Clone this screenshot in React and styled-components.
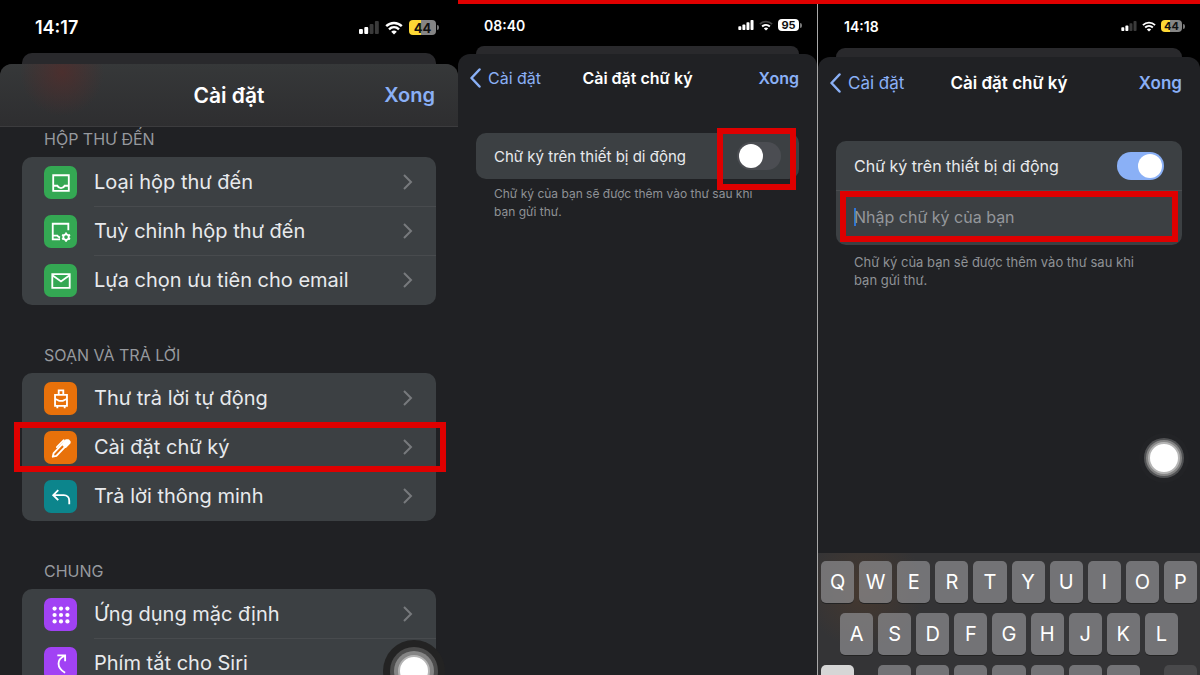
import { useState } from "react";
import styled, { createGlobalStyle, css } from "styled-components";

const GlobalStyle = createGlobalStyle`
  * {
    box-sizing: border-box;
  }

  body {
    margin: 0;
    background: #000;
    color: #e8eaed;
    font-family: Inter, "Noto Sans", sans-serif;
  }

  button, input {
    font-family: inherit;
    color: inherit;
    border: 0;
    padding: 0;
    margin: 0;
    background: none;
  }
`;

const RED = "#df0000";
const BLUE = "#8ab0f6";

const Page = styled.main`
  display: grid;
  grid-template-columns: 458fr 742fr;
  height: 100vh;
  overflow: hidden;
`;

const Pair = styled.div`
  display: grid;
  grid-template-columns: 359fr 1px 382fr;
  border-top: 4px solid ${RED};
  min-height: 0;
`;

const Divider = styled.div`
  background: #a8a8a8;
`;

const Screen = styled.section`
  position: relative;
  display: flex;
  flex-direction: column;
  min-width: 0;
  min-height: 0;
  overflow: hidden;
`;

const StatusBar = styled.div`
  display: flex;
  flex: none;
  align-items: center;
  justify-content: space-between;
  height: ${(p) => p.$height}px;
  padding: ${(p) => (p.$large ? "2px 19px 0 35px" : "0 15px 0 26px")};
`;

const Clock = styled.time`
  color: #fff;
  font-size: ${(p) => (p.$large ? 18 : 14)}px;
  font-weight: 600;
`;

const StatusIcons = styled.div`
  display: flex;
  align-items: center;
  gap: ${(p) => (p.$large ? 6 : 5)}px;
`;

const Battery = styled.span`
  display: flex;
  align-items: center;
  justify-content: center;
  width: ${(p) => (p.$large ? 27 : 21)}px;
  height: ${(p) => (p.$large ? 15 : 12)}px;
  border-radius: 4px;
  font-size: ${(p) => (p.$large ? 13 : 11)}px;
  font-weight: 700;
  color: #111;
  background: ${(p) =>
    p.$low ? "linear-gradient(90deg, #fdd835 44%, #858585 44%)" : "#fff"};
`;

const BatteryTip = styled.span`
  width: 2px;
  height: 5px;
  margin-left: ${(p) => (p.$large ? -5 : -4)}px;
  border-radius: 0 2px 2px 0;
  background: #777;
`;

const BackSheet = styled.div`
  flex: none;
  height: ${(p) => p.$height}px;
  margin: 0 ${(p) => (p.$large ? 22 : 18)}px;
  border-radius: 10px 10px 0 0;
  background: #29292c;
`;

const Sheet = styled.div`
  display: flex;
  flex: 1;
  flex-direction: column;
  min-height: 0;
  overflow: hidden;
  border-radius: 12px 12px 0 0;
  background: #202124;
`;

const NavBar = styled.header`
  display: grid;
  flex: none;
  grid-template-columns: 1fr auto 1fr;
  align-items: center;
  height: ${(p) => p.$height}px;
  padding: 0 ${(p) => (p.$large ? 23 : 18)}px;
  ${(p) =>
    p.$large &&
    css`
      border-bottom: 1px solid #3c3c3e;
      background: radial-gradient(
          ellipse 42px 44px at 62px 8px,
          rgba(90, 42, 40, 0.6),
          transparent
        ),
        linear-gradient(#363839, #2e2e30);
    `}
`;

const NavTitle = styled.h1`
  grid-column: 2;
  margin: 0;
  color: #fff;
  font-size: ${(p) => p.$size}px;
  font-weight: 600;
`;

const NavDone = styled.button`
  justify-self: end;
  color: ${BLUE};
  font-size: ${(p) => p.$size}px;
  font-weight: 600;
`;

const NavBack = styled.a`
  display: flex;
  align-items: center;
  gap: 7px;
  margin-left: -7px;
  color: ${BLUE};
  font-size: ${(p) => p.$size}px;
  text-decoration: none;
`;

const GroupList = styled.div`
  display: flex;
  flex-direction: column;
  gap: 38px;
  padding: 0 22px;
`;

const GroupTitle = styled.h2`
  margin: 0;
  padding: 2px 22px 8px;
  color: #96999e;
  font-size: 16px;
  font-weight: 400;
  line-height: 20px;
`;

const Card = styled.div`
  position: relative;
  border-radius: 10px;
  background: #3c4043;
`;

const MenuCard = styled(Card)`
  padding-top: 1px;
`;

const Row = styled.button`
  position: relative;
  display: flex;
  align-items: center;
  width: 100%;
  height: 49px;
  padding-left: 22px;
  text-align: left;
`;

const IconTile = styled.span`
  display: flex;
  align-items: center;
  justify-content: center;
  width: 33px;
  height: 33px;
  margin-right: 17px;
  border-radius: 7px;
  background: ${(p) => p.$color};
`;

const RowBody = styled.span`
  display: flex;
  flex: 1;
  align-items: center;
  justify-content: space-between;
  height: 100%;
  padding: 0 23px 1px 0;
  box-shadow: ${(p) => (p.$last ? "none" : "inset 0 -1px 0 #484b4e")};
  font-size: 20px;
`;

const Highlight = styled.span`
  position: absolute;
  inset: ${(p) => p.$inset};
  border: 6px solid ${RED};
  pointer-events: none;
`;

const Content = styled.div`
  padding: ${(p) => p.$top}px 18px 0;
`;

const SwitchRow = styled.label`
  display: flex;
  align-items: center;
  justify-content: space-between;
  height: ${(p) => p.$height}px;
  padding: 0 18px;
  font-size: ${(p) => p.$size}px;
`;

const Switch = styled.input`
  appearance: none;
  display: flex;
  align-items: center;
  width: ${(p) => p.$width}px;
  height: 28px;
  padding: 0 2px;
  border-radius: 14px;
  background: #4b4d52;

  &::before {
    content: "";
    width: 24px;
    height: 24px;
    border-radius: 50%;
    background: #fff;
  }

  &:checked {
    justify-content: flex-end;
    background: ${BLUE};
  }
`;

const SignatureField = styled.div`
  position: relative;
  height: 55px;
  padding: 0 18px 3px;
  border-top: 1px solid #4a4d50;
`;

const SignatureInput = styled.input`
  width: 100%;
  height: 100%;
  outline: 0;
  font-size: 16px;
  background: linear-gradient(#2f74d8, #2f74d8) no-repeat 0 50% / 2px 18px;

  &::placeholder {
    color: #94979b;
    opacity: 1;
  }
`;

const Hint = styled.p`
  margin: 0;
  padding: ${(p) => p.$top}px 24px 0 18px;
  color: #8f9296;
  font-size: ${(p) => p.$size}px;
  line-height: 18px;
`;

const TouchDot = styled.button`
  position: absolute;
  right: ${(p) => (p.$large ? 28 : 20)}px;
  bottom: ${(p) => (p.$large ? -12 : 201)}px;
  width: 32px;
  height: 32px;
  border: 2px solid #b5b5b5;
  border-radius: 50%;
  background: #fff;
  box-shadow: ${(p) =>
    p.$large
      ? "0 0 0 4px #858585, 0 0 0 8px #4c4c4c, 0 0 0 15px #232323"
      : "0 0 0 2px #858585, 0 0 0 4px #505153, 0 0 0 9px #222326"};
`;

const Keyboard = styled.div`
  display: flex;
  flex: none;
  flex-direction: column;
  gap: 10px;
  height: 122px;
  padding: 8px 3px 0;
  overflow: hidden;
  background: radial-gradient(
      circle 60px at 46px 36px,
      rgba(92, 62, 38, 0.45),
      transparent
    ),
    #343436;
`;

const KeyRow = styled.div`
  display: grid;
  flex: none;
  grid-template-columns: repeat(20, 1fr);
  column-gap: 5px;
`;

const Key = styled.button`
  grid-column: ${(p) => p.$column};
  min-width: 0;
  height: 42px;
  border-radius: 5px;
  background: ${(p) => p.$tone || "rgba(140, 140, 143, 0.72)"};
  box-shadow: 0 1px 0 #232323;
  color: #fff;
  font-size: 20px;
`;

const STROKE = {
  fill: "none",
  stroke: "#fff",
  strokeWidth: 2,
};

const InboxIcon = () => (
  <svg width="22" height="22" viewBox="0 0 24 24" {...STROKE}>
    <path d="M3.5 3.5h17v17h-17zM3.5 15H8c.8 1.7 2 2.5 4 2.5s3.2-.8 4-2.5h4.5" />
  </svg>
);

const InboxGearIcon = () => (
  <svg width="22" height="22" viewBox="0 0 24 24" {...STROKE}>
    <path d="M20 10V3H3v17h8M3 16h5c.6 1.2 1.4 1.7 3 2" />
    <circle cx="17.5" cy="17.5" r="3" />
    <path d="M17.500 12.500v2.500M17.500 20v2.500M13.200 15l2.200 1.300M19.700 18.700l2.200 1.300M13.200 20l2.200-1.300M19.700 16.300l2.200-1.300" />
  </svg>
);

const MailIcon = () => (
  <svg width="22" height="22" viewBox="0 0 24 24" {...STROKE}>
    <path d="M2.5 4.5h19v15h-19zM3 6l9 6.5L21 6" />
  </svg>
);

const LuggageIcon = () => (
  <svg width="22" height="22" viewBox="0 0 24 24" {...STROKE}>
    <path d="M5.5 7.5h13v12h-13zM9.5 7V2.500h5V7M6 12l4 2h4l4-2M8 20v2M16 20v2" />
  </svg>
);

const PenIcon = () => (
  <svg width="22" height="22" viewBox="0 0 24 24" {...STROKE} strokeLinejoin="round">
    <path d="M3 21.500l1-4L16 5l3 3L7 20.500z" />
    <path d="M15 6l2.500-2.500h2.500l1.500 1.500v1.500L17 11l-2.500-2z" fill="#fff" />
    <path d="M7.500 11L15 3.500" strokeLinecap="round" />
  </svg>
);

const ReplyIcon = () => (
  <svg width="22" height="22" viewBox="0 0 24 24" {...STROKE}>
    <path d="M9 4.5L3.5 10 9 15.5M4 10h11c3.5 0 6 2.300 6 6v4" />
  </svg>
);

const AppsIcon = () => (
  <svg width="22" height="22" viewBox="0 0 24 24" fill="#fff">
    {[5, 12, 19].map((y) =>
      [5, 12, 19].map((x) => <circle key={`${x}-${y}`} cx={x} cy={y} r="2.3" />)
    )}
  </svg>
);

const SiriIcon = () => (
  <svg width="22" height="22" viewBox="0 0 24 24" {...STROKE}>
    <path d="M8 2.500h8.500V9M16 3C7 7 7 16 16.500 21.500" />
  </svg>
);

const ChevronRight = () => (
  <svg width="11" height="18" viewBox="0 0 11 18" fill="none" stroke="#777a7d" strokeWidth="2">
    <path d="M2 2l7 7-7 7" />
  </svg>
);

const ChevronLeft = () => (
  <svg width="12" height="20" viewBox="0 0 12 20" fill="none" stroke={BLUE} strokeWidth="2.5">
    <path d="M10.500 1.500L2.500 10l8 8.500" strokeLinecap="round" strokeLinejoin="round" />
  </svg>
);

const Signal = ({ bars, width }) => (
  <svg width={width} height={Math.round(width * 0.65)} viewBox="0 0 20 13">
    {[5, 7, 10, 13].map((h, i) => (
      <rect
        key={h}
        x={i * 5.3}
        y={13 - h}
        width="3.9"
        height={h}
        rx="1"
        fill={i < bars ? "#fff" : "#3a3a3a"}
      />
    ))}
  </svg>
);

const Wifi = ({ width, weak }) => (
  <svg width={width} height={Math.round(width * 0.75)} viewBox="0 0 18 13">
    <g fill="none" stroke="#fff" strokeWidth="2.4">
      <path d="M1.2 4.7c4.4-4.3 11.2-4.3 15.6 0" stroke={weak ? "#444" : "#fff"} />
      <path d="M4 7.8c2.900-2.700 7.100-2.700 10 0" />
    </g>
    <path d="M6.2 10.200c1.700-1.500 3.900-1.500 5.600 0L9 13z" fill="#fff" />
  </svg>
);

const groups = [
  {
    title: "HỘP THƯ ĐẾN",
    color: "#34a853",
    rows: [
      { label: "Loại hộp thư đến", icon: InboxIcon },
      { label: "Tuỳ chỉnh hộp thư đến", icon: InboxGearIcon },
      { label: "Lựa chọn ưu tiên cho email", icon: MailIcon },
    ],
  },
  {
    title: "SOẠN VÀ TRẢ LỜI",
    color: "#e8710a",
    rows: [
      { label: "Thư trả lời tự động", icon: LuggageIcon },
      { label: "Cài đặt chữ ký", icon: PenIcon, highlight: true },
      { label: "Trả lời thông minh", icon: ReplyIcon, color: "#0c858c" },
    ],
  },
  {
    title: "CHUNG",
    color: "#a142f4",
    rows: [
      { label: "Ứng dụng mặc định", icon: AppsIcon },
      { label: "Phím tắt cho Siri", icon: SiriIcon },
    ],
  },
];

function Status({ time, charge, height, bars, large, low }) {
  return (
    <StatusBar $height={height} $large={large}>
      <Clock $large={large}>{time}</Clock>
      <StatusIcons $large={large}>
        <Signal bars={bars} width={large ? 20 : 16} />
        <Wifi width={large ? 18 : 14} weak={!low} />
        <Battery $large={large} $low={low}>
          {charge}
        </Battery>
        <BatteryTip $large={large} />
      </StatusIcons>
    </StatusBar>
  );
}

function SettingsScreen() {
  return (
    <Screen>
      <Status time="14:17" charge="44" height={53} bars={2} large low />
      <BackSheet $height={11} $large />
      <Sheet>
        <NavBar $height={63} $large>
          <NavTitle $size={21}>Cài đặt</NavTitle>
          <NavDone $size={20}>Xong</NavDone>
        </NavBar>
        <GroupList>
          {groups.map((group) => (
            <section key={group.title}>
              <GroupTitle>{group.title}</GroupTitle>
              <MenuCard>
                {group.rows.map((row, i) => (
                  <Row key={row.label}>
                    <IconTile $color={row.color || group.color}>
                      <row.icon />
                    </IconTile>
                    <RowBody $last={i === 2}>
                      {row.label}
                      <ChevronRight />
                    </RowBody>
                    {row.highlight && <Highlight $inset="-1px -10px 0 -8px" />}
                  </Row>
                ))}
              </MenuCard>
            </section>
          ))}
        </GroupList>
      </Sheet>
      <TouchDot $large aria-label="AssistiveTouch" />
    </Screen>
  );
}

function SignatureNav({ size, height }) {
  return (
    <NavBar $height={height}>
      <NavBack href="#settings" $size={size}>
        <ChevronLeft />
        Cài đặt
      </NavBack>
      <NavTitle $size={size}>Cài đặt chữ ký</NavTitle>
      <NavDone $size={size}>Xong</NavDone>
    </NavBar>
  );
}

function SignatureOff() {
  const [on, setOn] = useState(false);

  return (
    <Screen>
      <Status time="08:40" charge="95" height={42} bars={4} />
      <BackSheet $height={8} />
      <Sheet>
        <SignatureNav size={16} height={48} />
        <Content $top={31}>
          <Card>
            <SwitchRow $height={46} $size={15}>
              Chữ ký trên thiết bị di động
              <Switch
                type="checkbox"
                role="switch"
                $width={44}
                checked={on}
                onChange={() => setOn(!on)}
              />
            </SwitchRow>
            <Highlight $inset="-5px 3px -11px calc(100% - 82px)" />
          </Card>
          <Hint $top={6} $size={12}>
            Chữ ký của bạn sẽ được thêm vào thư sau khi bạn gửi thư.
          </Hint>
        </Content>
      </Sheet>
    </Screen>
  );
}

const KEYS_TOP = "QWERTYUIOP".split("");
const KEYS_HOME = "ASDFGHJKL".split("");
const KEYS_BOTTOM = "ZXCVBNM".split("");

function SignatureOn() {
  const [on, setOn] = useState(true);
  const [signature, setSignature] = useState("");

  return (
    <Screen>
      <Status time="14:18" charge="44" height={44} bars={2} low />
      <BackSheet $height={9} />
      <Sheet>
        <SignatureNav size={17} height={52} />
        <Content $top={32}>
          <Card>
            <SwitchRow $height={49} $size={16}>
              Chữ ký trên thiết bị di động
              <Switch
                type="checkbox"
                role="switch"
                $width={47}
                checked={on}
                onChange={() => setOn(!on)}
              />
            </SwitchRow>
            <SignatureField>
              <SignatureInput
                aria-label="Nhập chữ ký của bạn"
                placeholder="Nhập chữ ký của bạn"
                value={signature}
                onChange={(e) => setSignature(e.target.value)}
              />
              <Highlight $inset="0 4px 3px 4px" />
            </SignatureField>
          </Card>
          <Hint $top={8} $size={13}>
            Chữ ký của bạn sẽ được thêm vào thư sau khi bạn gửi thư.
          </Hint>
        </Content>
      </Sheet>
      <Keyboard>
        <KeyRow>
          {KEYS_TOP.map((k, i) => (
            <Key key={k} $column={`${i * 2 + 1} / span 2`}>
              {k}
            </Key>
          ))}
        </KeyRow>
        <KeyRow>
          {KEYS_HOME.map((k, i) => (
            <Key key={k} $column={`${i * 2 + 2} / span 2`}>
              {k}
            </Key>
          ))}
        </KeyRow>
        <KeyRow>
          <Key $column="1 / span 2" $tone="#d6d6d6" aria-label="Shift" />
          {KEYS_BOTTOM.map((k, i) => (
            <Key key={k} $column={`${i * 2 + 4} / span 2`} aria-label={k} />
          ))}
          <Key $column="19 / span 2" $tone="#49494b" aria-label="Delete" />
        </KeyRow>
      </Keyboard>
      <TouchDot aria-label="AssistiveTouch" />
    </Screen>
  );
}

function App() {
  return (
    <>
      <GlobalStyle />
      <Page>
        <SettingsScreen />
        <Pair>
          <SignatureOff />
          <Divider />
          <SignatureOn />
        </Pair>
      </Page>
    </>
  );
}

export default App;
